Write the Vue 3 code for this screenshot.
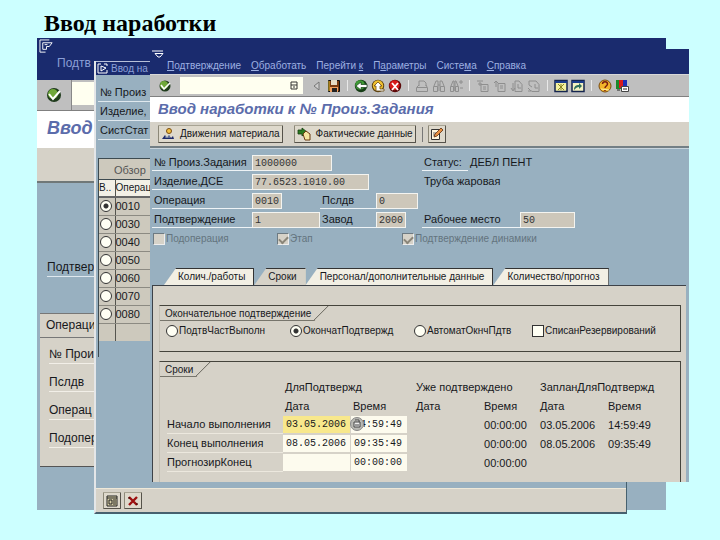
<script setup>
import { ref } from 'vue'

const menu = [
  ['', 'П', 'одтверждение'],
  ['', 'О', 'бработать'],
  ['Перейти ', 'к', ''],
  ['П', 'а', 'раметры'],
  ['Систе', 'м', 'а'],
  ['', 'С', 'правка'],
]

const operations = ['0010', '0030', '0040', '0050', '0060', '0070', '0080']
const operation = ref('0010')

const backRows = ['№ Прои', 'Пслдв', 'Операц', 'Подопер']
const midRows = ['№ Произ', 'Изделие,', 'СистСтат']

const tabs = ['Колич./работы', 'Сроки', 'Персонал/дополнительные данные', 'Количество/прогноз']
const activeTab = ref(1)

const modes = ['ПодтвЧастВыполн', 'ОкончатПодтвержд', 'АвтоматОкнчПдтв']
const mode = ref(1)
const writeOff = ref(false)

const terms = ref([
  { id: 'start', label: 'Начало выполнения', date: '03.05.2006', time: '14:59:49', done: '00:00:00', pd: '03.05.2006', pt: '14:59:49' },
  { id: 'end', label: 'Конец выполнения', date: '08.05.2006', time: '09:35:49', done: '00:00:00', pd: '08.05.2006', pt: '09:35:49' },
  { id: 'forecast', label: 'ПрогнозирКонец', date: '', time: '00:00:00', done: '00:00:00', pd: '', pt: '' },
])
</script>

<template>
  <main class="slide">
    <h1 class="slide-title">Ввод наработки</h1>

    <section class="win back">
      <header class="back-bar">
        <svg class="glyph" viewBox="0 0 16 16"><path d="M1 14V1h10M1 14h6M4 4h10l-3 4H8v3H4zM6 6h3" /></svg>
        <span class="back-menu">Подтв</span>
      </header>
      <div class="back-tools">
        <button class="plain" aria-label="Enter">
          <svg class="ok-big" viewBox="0 0 16 16"><circle cx="8" cy="8" r="7" fill="#1f3b1c" /><circle cx="7" cy="7" r="5" fill="#6fa83a" /><path d="M3 7l4 5 7-8" fill="none" stroke="#fff" stroke-width="2" /></svg>
        </button>
        <input class="back-cmd" aria-label="Команда">
      </div>
      <h2 class="back-title">Ввод</h2>
      <div class="back-strip"></div>
      <div class="back-body">
        <div class="back-label">Подтвер</div>
        <div class="back-group">
          <div class="back-head">Операци</div>
          <div v-for="r in backRows" :key="r" class="back-row">{{ r }}</div>
        </div>
      </div>
    </section>

    <section class="win mid">
      <header class="mid-bar">
        <svg class="mid-glyph" viewBox="0 0 11 11"><path d="M1 1h3M1 1v9h9V7M4 3l5 2-5 3zM7 1h3v2" /></svg>
        <span>Ввод на</span>
      </header>
      <div class="mid-body">
        <div class="mid-fields">
          <div v-for="r in midRows" :key="r" class="mid-row">{{ r }}</div>
        </div>
        <div class="mid-list">
          <table class="ops">
            <caption>Обзор</caption>
            <thead><tr><th class="sel">В..</th><th>Операц</th></tr></thead>
            <tbody>
              <tr v-for="o in operations" :key="o">
                <td class="sel"><input :id="'op' + o" v-model="operation" class="radio" type="radio" name="op" :value="o"></td>
                <td><label :for="'op' + o">{{ o }}</label></td>
              </tr>
              <tr class="blank"><td class="sel"></td><td></td></tr>
            </tbody>
          </table>
        </div>
      </div>
      <footer class="mid-foot">
        <button class="raised small" aria-label="Выбрать">
          <svg class="i12" viewBox="0 0 12 12"><path d="M1 1h10v10H1zM1 3h10M3 5h3v4H3zM7 5h3M7 7h3M7 9h3" fill="#d8d0a8" stroke="#222" /></svg>
        </button>
        <button class="raised small" aria-label="Отмена">
          <svg class="i12" viewBox="0 0 12 12"><path d="M2 2l8 8M10 2l-8 8" stroke="#9c1010" stroke-width="2.4" /><path d="M1 3h2M9 9h2" stroke="#300" /></svg>
        </button>
      </footer>
    </section>

    <section class="win front">
      <header class="menubar">
        <svg class="front-glyph" viewBox="0 0 12 9"><path d="M0 1h11M3 3.5h8L8 7H6z" /></svg>
        <nav class="menu">
          <a v-for="m in menu" :key="m.join('')" href="#">{{ m[0] }}<u>{{ m[1] }}</u>{{ m[2] }}</a>
        </nav>
      </header>

      <div class="tools">
        <button class="plain ok" aria-label="Enter">
          <svg class="i12" viewBox="0 0 12 12"><circle cx="6" cy="6" r="5.5" fill="#1f3b1c" /><circle cx="5" cy="5" r="4" fill="#6fa83a" /><path d="M2 5l3 4 6-6" fill="none" stroke="#fff" stroke-width="1.6" /></svg>
        </button>
        <div class="cmd">
          <input aria-label="Код транзакции">
          <svg viewBox="0 0 8 9"><path d="M1 1h6v7H1zM1 4h6M3 6h2" fill="none" stroke="#333" /></svg>
        </div>
        <div class="icons">
          <button class="plain" aria-label="Свернуть"><svg viewBox="0 0 14 14"><path d="M9 3v8L4 7z" fill="#ccc" stroke="#777" /></svg></button>
          <button class="plain" aria-label="Сохранить"><svg viewBox="0 0 14 14"><path d="M1.500 1.500h11v11h-11z" fill="#7a3b10" stroke="#111" /><path d="M4 1h6v5H4z" fill="#e5dcc5" /><path d="M3 8h8v5H3z" fill="#f0a060" /><path d="M5 9h5v4H5z" fill="#222" /><path d="M2 2v10" stroke="#e0c030" /></svg></button>
          <i class="sep"></i>
          <button class="plain" aria-label="Назад"><svg viewBox="0 0 14 14"><circle cx="7" cy="7" r="6.200" fill="#173d17" /><circle cx="6" cy="6" r="4.800" fill="#3f9a35" /><path d="M2 7l5-4v2.500h6v3H7V11z" fill="#fff" stroke="#173d17" stroke-width=".7" /></svg></button>
          <button class="plain" aria-label="Завершить"><svg viewBox="0 0 14 14"><circle cx="7" cy="7" r="6.200" fill="#594010" /><circle cx="7" cy="6.500" r="5.200" fill="#f0c030" /><path d="M7 3l4 4H9v3h4v2H5V7H3z" fill="#fff" stroke="#6b4a10" stroke-width=".8" /></svg></button>
          <button class="plain" aria-label="Отменить"><svg viewBox="0 0 14 14"><circle cx="7" cy="7" r="6.200" fill="#5c0808" /><circle cx="6.500" cy="6.300" r="5" fill="#d81c1c" /><path d="M4 4l6 7M10 4l-6 7" stroke="#fff" stroke-width="1.800" /></svg></button>
          <i class="sep"></i>
          <button class="plain dim" aria-label="Печать"><svg viewBox="0 0 14 14"><path d="M4 7V2h5l2 2v3M1.500 8.500h11v4h-11zM2 8l2-2M12 8l-1-2" /></svg></button>
          <button class="plain dim" aria-label="Найти"><svg viewBox="0 0 14 14"><path d="M1.500 7.500h4v5h-4zM8.500 7.500h4v5h-4zM2 7l2-5h2v10M12 7l-2-5H8v10M6 6h2" /></svg></button>
          <button class="plain dim" aria-label="Найти далее"><svg viewBox="0 0 14 14"><path d="M1.500 7.500h3v5h-3zM6.500 7.500h3v5h-3zM2 7l2-5h1v10M9 7L7 2H6v10M10 3h4M12 1v4M11 9h3" /></svg></button>
          <i class="sep"></i>
          <button class="plain dim page" aria-label="Первая страница"><svg viewBox="0 0 14 14"><path d="M5 5.500h7v7H5zM1 2h6M2 5h4M4 3v4M7 8h3M7 10h3" /></svg></button>
          <button class="plain dim page" aria-label="Предыдущая страница"><svg viewBox="0 0 14 14"><path d="M5 4.500h7v8H5zM1 4l2-2 2 2M3 2v6M7 7h3M7 9h3" /></svg></button>
          <button class="plain dim page" aria-label="Следующая страница"><svg viewBox="0 0 14 14"><path d="M5 12.500h7v-7L9 2H5zM1 9l2 3 2-3M3 4v7M8 5v4h3" /></svg></button>
          <button class="plain dim page" aria-label="Последняя страница"><svg viewBox="0 0 14 14"><path d="M5 12.500h7v-7L9 2H2v4l3 2M1 9l3 3M1 12h4M8 5v4h3" /></svg></button>
          <i class="sep"></i>
          <button class="plain" aria-label="Новый режим"><svg viewBox="0 0 14 14"><path d="M1 1.500h12v11H1z" fill="#f4f2a0" stroke="#15254f" stroke-width="1.500" /><path d="M1 3h12" stroke="#1b3c8c" stroke-width="2" /><path d="M4 5l6 6M10 5l-6 6M7 5v6" stroke="#8a8420" /></svg></button>
          <button class="plain" aria-label="Ярлык"><svg viewBox="0 0 14 14"><path d="M1 1.500h12v11H1z" fill="#f4f2c0" stroke="#15254f" stroke-width="1.500" /><path d="M1 3h12" stroke="#1b3c8c" stroke-width="2" /><path d="M3 11c0-4 2-5 5-5V4l3 3-3 3V8c-2 0-3 1-5 3z" fill="#2d6f5c" /></svg></button>
          <i class="sep"></i>
          <button class="plain" aria-label="Справка"><svg viewBox="0 0 14 14"><circle cx="7" cy="7" r="6" fill="#f1b52a" stroke="#7a4b10" /><path d="M4.500 5c0-3 5-3 5 0 0 2-2.500 2-2.500 4M7 10v2" fill="none" stroke="#7a1d10" stroke-width="1.500" /><path d="M3 10l8 1" stroke="#fff3a0" /></svg></button>
          <button class="plain" aria-label="Настройка"><svg viewBox="0 0 14 14"><path d="M1 1h10v9H1z" fill="#1b8a2c" /><path d="M4 1h4v8H4z" fill="#d81c1c" /><path d="M8 1h4v6H8z" fill="#1c2fb8" /><path d="M6.500 7.500h7v5h-7z" fill="#fff" stroke="#444" /><path d="M8 10h4M2 11h3" stroke="#222" /></svg></button>
        </div>
      </div>

      <h2 class="title">Ввод наработки к № Произ.Задания</h2>

      <div class="appbar">
        <button class="raised">
          <svg class="i14" viewBox="0 0 14 14"><circle cx="8" cy="4" r="2.500" fill="#f2c040" stroke="#7a4b10" /><path d="M1 12l3-4 2 3 2-3 2 3 2-2 1 3z" fill="#1d2a6b" /><path d="M4 10h5" stroke="#9ab" /></svg>
          Движения материала
        </button>
        <button class="raised">
          <svg class="i14" viewBox="0 0 14 14"><path d="M1 3h4V1l5 4-5 4V7H1z" fill="#2b7a1f" stroke="#143d10" stroke-width=".8" /><path d="M6 7l3-3 4 3v6H8z" fill="#f5e6a0" stroke="#6b3b10" /></svg>
          Фактические данные
        </button>
        <i class="sep dark"></i>
        <button class="raised edit" aria-label="Длинный текст">
          <svg class="i14" viewBox="0 0 14 14"><path d="M1.500 2.500h8v10h-8z" fill="#fff6dc" stroke="#333" /><path d="M3 6h3M3 8h2" stroke="#666" /><path d="M4 10l1-3 6-6 2 2-6 6z" fill="#e89040" stroke="#5b2c10" stroke-width=".8" /></svg>
        </button>
      </div>

      <div class="body">
        <div class="fields">
          <label for="f1" class="lab">№ Произ.Задания</label>
          <input id="f1" class="fld w80" value="1000000" readonly>
          <span class="lab status">Статус:</span><span class="val st">ДЕБЛ ПЕНТ</span>

          <label for="f2" class="lab">Изделие,ДСЕ</label>
          <input id="f2" class="fld w117" value="77.6523.1010.00" readonly>
          <span class="val desc">Труба жаровая</span>

          <label for="f3" class="lab">Операция</label>
          <input id="f3" class="fld w30" value="0010" readonly>
          <label for="f4" class="lab second">Пслдв</label>
          <input id="f4" class="fld w42" value="0" readonly>

          <label for="f5" class="lab">Подтверждение</label>
          <input id="f5" class="fld full" value="1" readonly>
          <label for="f6" class="lab second">Завод</label>
          <input id="f6" class="fld w30" value="2000" readonly>
          <label for="f7" class="lab place">Рабочее место</label>
          <input id="f7" class="fld w55" value="50" readonly>
        </div>

        <div class="flags">
          <label><input type="checkbox" class="check" disabled>Подоперация</label>
          <label><input type="checkbox" class="check" checked disabled>Этап</label>
          <label><input type="checkbox" class="check" checked disabled>Подтверждение динамики</label>
        </div>

        <div class="tabs" role="tablist">
          <button v-for="(t, i) in tabs" :key="t" role="tab" :aria-selected="activeTab === i" class="tab" :class="{ on: activeTab === i }" @click="activeTab = i">{{ t }}</button>
        </div>

        <div class="panel">
          <section class="group">
            <h3 class="cap">Окончательное подтверждение</h3>
            <div class="modes">
              <label v-for="(m, i) in modes" :key="m"><input v-model="mode" class="radio" type="radio" name="mode" :value="i">{{ m }}</label>
              <label><input v-model="writeOff" type="checkbox" class="check">СписанРезервирований</label>
            </div>
          </section>

          <section class="group terms">
            <h3 class="cap">Сроки</h3>
            <table class="dates">
              <colgroup><col class="c1"><col class="c2"><col class="c3"><col class="c2"><col class="c4"><col class="c2"><col></colgroup>
              <thead>
                <tr><th></th><th colspan="2">ДляПодтвержд</th><th colspan="2">Уже подтверждено</th><th colspan="2">ЗапланДляПодтвержд</th></tr>
                <tr><th></th><th>Дата</th><th>Время</th><th>Дата</th><th>Время</th><th>Дата</th><th>Время</th></tr>
              </thead>
              <tbody>
                <tr v-for="(t, i) in terms" :key="t.id">
                  <th><label :for="'d' + t.id" class="line">{{ t.label }}</label></th>
                  <td><input :id="'d' + t.id" v-model="t.date" class="edit-date" :class="{ focus: i === 0 }"></td>
                  <td class="time-cell">
                    <input v-model="t.time" class="edit-time" :aria-label="t.label + ', время'">
                    <button v-if="i === 0" class="lookup" aria-label="Выбор значения"><svg viewBox="0 0 14 14"><circle cx="7" cy="7" r="6.500" fill="#b9b9b4" stroke="#888" /><path d="M4 5h6v5H4zM5 3h4v2M5 8h4" fill="#eee" stroke="#444" /></svg></button>
                  </td>
                  <td></td>
                  <td>{{ t.done }}</td>
                  <td>{{ t.pd }}</td>
                  <td>{{ t.pt }}</td>
                </tr>
              </tbody>
            </table>
          </section>
        </div>
      </div>
    </section>
  </main>
</template>

<style>
body {
  margin: 0;
  background: #ccffff;
}
</style>

<style scoped>
* {
  box-sizing: border-box;
}
.slide {
  position: relative;
  min-height: 100vh;
  overflow: hidden;
  font-family: "Liberation Sans", Arial, sans-serif;
  font-size: 11px;
  line-height: 14px;
  color: #16181c;
}
.slide-title {
  margin: 0;
  padding: 9px 44px 0;
  font: bold 24px/28px "Liberation Serif", "Times New Roman", serif;
  color: #000;
}
button, input {
  font: inherit;
  color: inherit;
  padding: 0;
  margin: 0;
  border: 0;
  min-width: 0;
}
h2, h3 {
  margin: 0;
}
svg {
  display: block;
  flex: none;
}
.win {
  position: absolute;
  display: flex;
  flex-direction: column;
  overflow: hidden;
  background: #98b0c0;
}
.plain {
  background: none;
}
.i12 { width: 12px; height: 12px; }
.i14 { width: 14px; height: 14px; }

/* rear window */
.back {
  left: 37px;
  top: 38px;
  right: 54px;
  bottom: 30px;
  font-size: 12px;
  line-height: 18px;
}
.back-bar {
  height: 42px;
  flex: none;
  padding: 1px 2px;
  background: #1a2b6e;
  color: #8b9fd6;
}
.glyph { width: 15px; height: 15px; }
.glyph path, .front-glyph path, .mid-glyph path {
  fill: none;
  stroke: #fff;
}
.back-menu {
  display: block;
  padding-left: 18px;
}
.back-tools {
  display: flex;
  height: 31px;
  flex: none;
  background: #bfbfbf;
  border-bottom: 1px solid #808080;
}
.back-tools .plain {
  width: 35px;
  padding-left: 9px;
  border-right: 1px solid #888;
}
.ok-big { width: 16px; height: 18px; }
.back-cmd {
  flex: 1;
  margin: 2px 0 5px;
  background: #fffff0;
}
.back-title {
  padding: 4px 10px 7px;
  background: #fff;
  color: #5b6cab;
  font-size: 18px;
  line-height: 26px;
  font-style: italic;
}
.back-strip {
  height: 35px;
  flex: none;
  background: #d6d2c8;
  border-bottom: 2px solid #707878;
}
.back-body {
  padding: 75px 3px 0;
}
.back-label {
  margin-left: 7px;
  border-bottom: 1px solid #dfe8ee;
}
.back-group {
  margin-top: 36px;
  padding-bottom: 18px;
  background: #d6d2c8;
  border-top: 1px solid #777;
  border-bottom: 1px solid #555;
}
.back-head {
  padding: 2px 6px 3px;
  border-bottom: 1px solid #777;
}
.back-row {
  margin-left: 9px;
  padding-top: 9px;
  border-bottom: 1px solid #f2efe8;
}
.back-head + .back-row {
  padding-top: 7px;
}

/* middle window */
.mid {
  left: 94px;
  top: 61px;
  right: 93px;
  bottom: 26px;
  border: solid #46616f;
  border-width: 0 1px 2px 0;
  border-left: 2px solid #e4e6e8;
}
.mid-bar {
  display: flex;
  gap: 3px;
  align-items: center;
  height: 14px;
  flex: none;
  padding-left: 1px;
  background: #1a2b6e;
  border-top: 1px solid #b8c0d8;
  color: #8b9fd6;
  font-size: 10px;
}
.mid-glyph { width: 11px; height: 11px; }
.mid-body {
  flex: 1;
  padding: 8px 2px 0;
}
.mid-row {
  height: 19px;
  padding: 2px;
  border-bottom: 1px solid #dfe8ee;
}
.mid-list {
  width: 80%;
  height: 199px;
  margin-top: 18px;
  border-left: 1px solid #3d4a50;
}
.ops {
  width: 100%;
  border-collapse: collapse;
  background: #cdc9bd;
  border-top: 1px solid #3d4a50;
}
.ops caption {
  height: 21px;
  padding: 4px 15px 0;
  text-align: left;
  color: #555;
  background: #cdc9bd;
  border-top: 1px solid #3d4a50;
}
.ops th {
  height: 17px;
  padding: 0;
  text-align: left;
  font-size: 10px;
  font-weight: normal;
  background: #f3f0e6;
  border-bottom: 2px solid #666;
}
.ops td {
  height: 18px;
  padding: 0;
  border-bottom: 1px solid #8c8a82;
}
.ops td label { display: block; line-height: 17px; }
.ops .sel {
  width: 16px;
  border-right: 1px solid #55554f;
}
.ops .blank td { border-bottom: 0; }
.mid-foot {
  display: flex;
  gap: 3px;
  height: 24px;
  flex: none;
  padding: 3px 7px;
  background: #d6d2c8;
  border-top: 1px solid #eee8d8;
}
.small {
  width: 18px;
  height: 17px;
}

/* front window */
.front {
  left: 150px;
  top: 49px;
  right: 31px;
  bottom: 58px;
}
.menubar {
  display: flex;
  height: 25px;
  flex: none;
  gap: 3px;
  padding: 1px 2px 0;
  background: #1a2b6e;
}
.front-glyph { width: 12px; height: 9px; }
.menu {
  display: flex;
  gap: 10px;
  padding-top: 9px;
  font-size: 10px;
}
.menu a {
  color: #9db0e2;
  text-decoration: none;
  white-space: pre;
}
.tools {
  display: flex;
  align-items: center;
  height: 23px;
  flex: none;
  background: #bfbfbf;
  border-top: 1px solid #d8d8d8;
  border-bottom: 1px solid #808080;
}
.ok {
  width: 30px;
  padding-left: 9px;
}
.cmd {
  display: flex;
  align-items: center;
  width: 123px;
  height: 17px;
  padding-right: 5px;
  background: #fffff0;
}
.cmd input {
  flex: 1;
  background: none;
}
.cmd svg { width: 8px; height: 9px; }
.icons {
  display: flex;
  align-items: center;
  gap: 3px;
  padding-left: 7px;
}
.icons svg { width: 14px; height: 14px; }
.sep {
  width: 1px;
  height: 11px;
  margin: 0 3px;
  background: #e8e8e8;
}
.dim path {
  fill: none;
  stroke: #8e8e8e;
}
.title {
  height: 25px;
  flex: none;
  padding: 2px 8px;
  background: #fff;
  color: #5b6cab;
  font-size: 15px;
  line-height: 20px;
  font-style: italic;
}
.appbar {
  display: flex;
  align-items: center;
  height: 26px;
  flex: none;
  padding-left: 8px;
  gap: 11px;
  font-size: 10px;
  background: #d6d2c8;
  border-bottom: 2px solid #737f85;
}
.raised {
  display: flex;
  align-items: center;
  justify-content: center;
  background: #ded9cc;
  border: 1px solid #55524a;
  border-left-color: #8c8878;
  border-top-color: #a8a494;
  border-radius: 1px;
}
.appbar .raised {
  height: 18px;
  gap: 5px;
  padding: 0 2px;
}
.appbar .edit { padding: 0 1px; }
.sep.dark {
  margin: 0 -6px 0 -5px;
  height: 15px;
  background: #777;
}
.body {
  display: flex;
  flex-direction: column;
  flex: 1;
  border-top: 1px solid #c8d4dc;
}
.fields {
  display: grid;
  grid-template-columns: 100px 68px 56px 46px 98px 1fr;
  grid-auto-rows: 16px;
  row-gap: 3px;
  padding: 6px 2px 0;
}
.lab {
  grid-column: 1;
  padding-left: 2px;
  border-bottom: 1px solid #eef3f6;
  white-space: nowrap;
}
.lab.second { grid-column: 3; }
.lab.status {
  grid-column: 5;
  width: 46px;
}
.lab.place { grid-column: 5; }
.val { white-space: nowrap; }
.st {
  grid-column: 5 / 7;
  grid-row: 1;
  padding-left: 48px;
}
.lab.status { grid-row: 1; }
.desc {
  grid-column: 5;
  padding-left: 2px;
}
.fld {
  height: 16px;
  padding-left: 2px;
  font-family: "Liberation Mono", monospace;
  font-size: 10px;
  background: #cdc7ba;
  border: 1px solid #f4f4f0;
  color: #333;
}
.w80 { width: 80px; }
.w117 { width: 117px; grid-column: 2 / 4; }
.w30 { width: 30px; }
.w42 { width: 42px; }
.w55 { width: 55px; }
.full { width: 100%; }
.flags {
  display: grid;
  grid-template-columns: 124px 125px 1fr;
  padding: 4px 3px 0;
  font-size: 10px;
  color: #64747e;
}
.flags label, .modes label {
  display: flex;
  align-items: center;
  gap: 1px;
  white-space: nowrap;
}
.radio, .check {
  appearance: none;
  flex: none;
  width: 12px;
  height: 12px;
  background: #fffff4;
  border: 1px solid #333;
}
.radio {
  display: block;
  border-radius: 50%;
  margin: 0 0 0 1px;
}
.radio:checked {
  background: radial-gradient(circle, #333 0 2px, #fffff4 3px);
}
.check:disabled {
  background: #d6d2c8;
  border-color: #6d7a82 #eee #eee #6d7a82;
}
.check:checked::after {
  content: "";
  display: block;
  width: 7px;
  height: 4px;
  margin: 2px 1px;
  border: solid #8a8578;
  border-width: 0 0 2px 2px;
  transform: rotate(-45deg);
}
.tabs {
  display: flex;
  height: 17px;
  margin-top: 22px;
  padding-left: 14px;
  font-size: 10px;
}
.tab {
  padding: 0 8px 0 14px;
  background: #f2efe4;
  border-top: 1px solid #333;
  border-right: 1px solid #333;
  clip-path: polygon(12px 0, 100% 0, 100% 100%, 0 100%);
  white-space: nowrap;
}
.tab.on {
  background: #d6d2c8;
  border-right-color: #d6d2c8;
}
.panel {
  flex: 1;
  margin: 0 3px 0 2px;
  padding: 19px 5px 0 6px;
  background: #d6d2c8;
  border-top: 1px solid #3d4248;
  border-left: 1px solid #3d4248;
}
.group {
  height: 47px;
  border: 1px solid #45443c;
  border-left-color: #c4c0b4;
}
.cap {
  display: inline-block;
  vertical-align: top;
  height: 15px;
  padding: 1px 18px 0 5px;
  font-size: 10px;
  font-weight: normal;
  border-bottom: 1px solid #77756c;
  background: linear-gradient(to bottom right, transparent 49%, #77756c 50%, #d6d2c8 54%) right / 16px 16px no-repeat;
  clip-path: polygon(0 0, 100% 0, calc(100% - 15px) 100%, 0 100%);
}
.modes {
  display: grid;
  grid-template-columns: 124px 124px 119px 1fr;
  padding: 3px 0 0 5px;
  font-size: 10px;
}
.terms {
  height: 150px;
  margin-top: 9px;
}
.dates {
  width: 100%;
  table-layout: fixed;
  border-collapse: collapse;
  margin-left: 6px;
}
.c1 { width: 117px; }
.c2 { width: 68px; }
.c3 { width: 63px; }
.c4 { width: 56px; }
.dates th, .dates td {
  height: 19px;
  padding: 0 0 0 2px;
  text-align: left;
  font-weight: normal;
  white-space: nowrap;
}
.dates tbody th { padding-left: 1px; }
.dates tbody td:nth-child(-n+3) { padding: 0; }
.line {
  display: block;
  line-height: 18px;
  border-bottom: 1px solid #ece8de;
}
.edit-date, .edit-time {
  display: block;
  width: 67px;
  height: 17px;
  padding-left: 3px;
  font-family: "Liberation Mono", monospace;
  font-size: 10px;
  background: #fdfbee;
}
.edit-time { width: 56px; }
.edit-date.focus { background: #f8e88c; }
.time-cell { position: relative; }
.lookup {
  position: absolute;
  left: -1px;
  top: 2px;
  background: none;
}
.lookup svg { width: 14px; height: 14px; }
</style>
